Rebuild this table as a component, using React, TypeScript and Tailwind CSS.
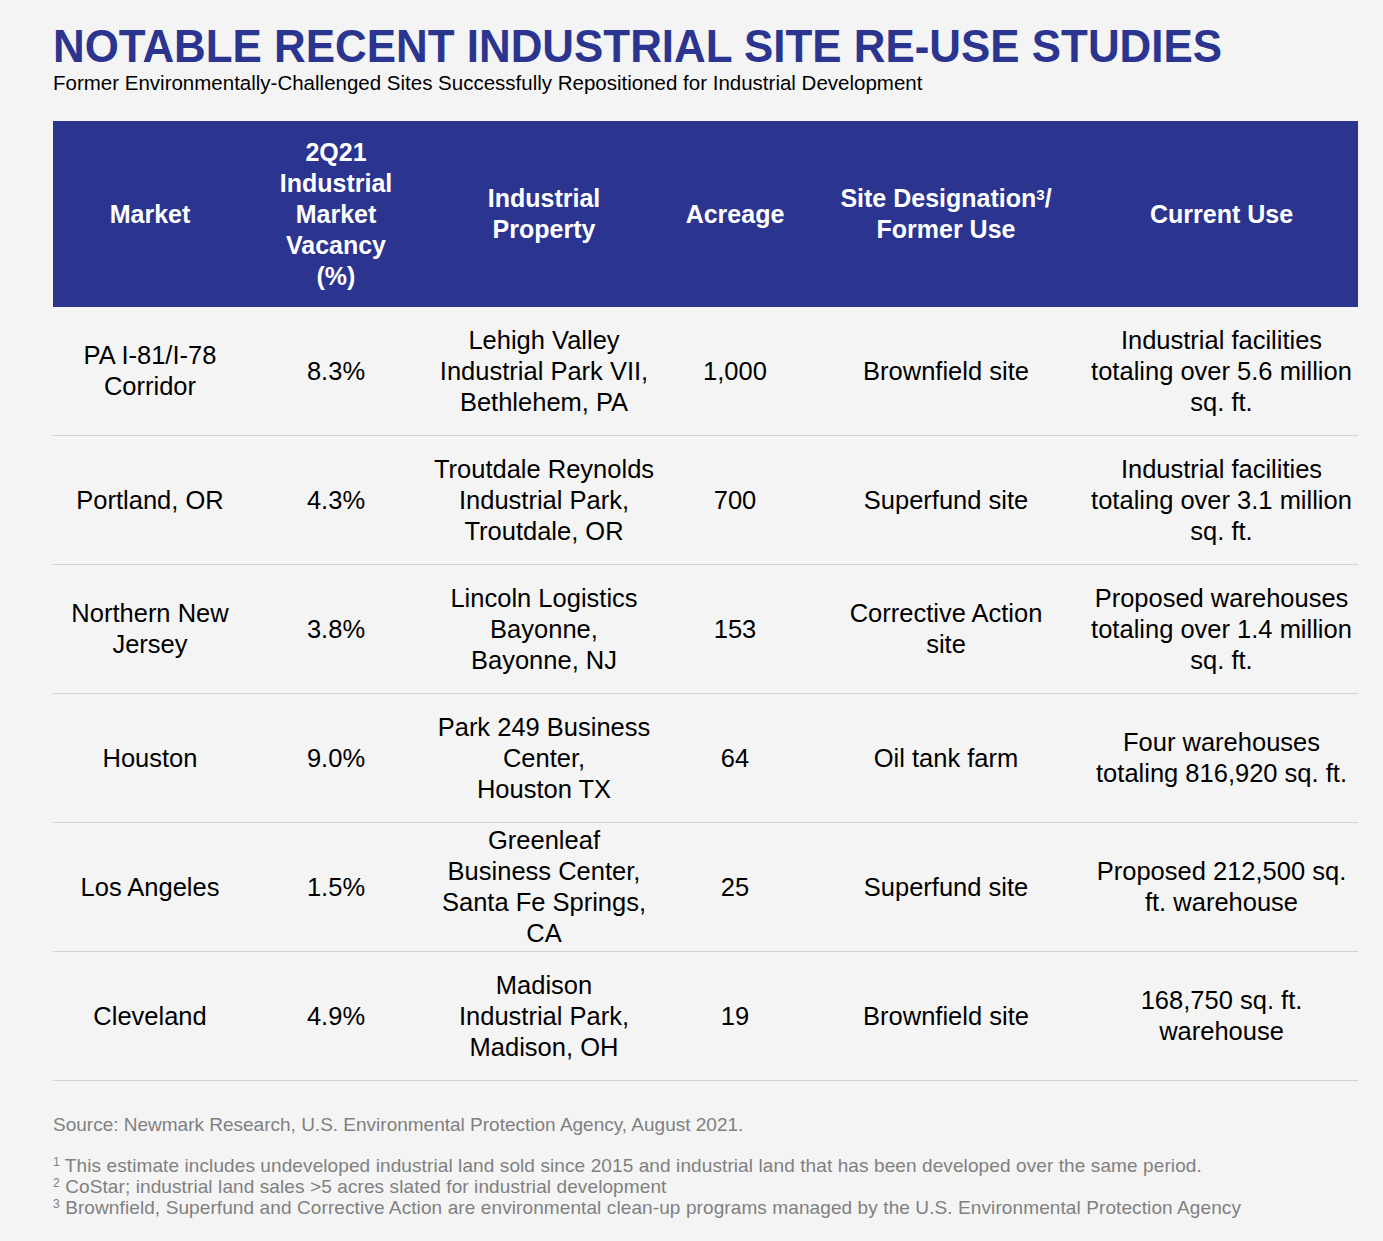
const rows = [
  ["PA I-81/I-78\nCorridor", "8.3%", "Lehigh Valley\nIndustrial Park VII,\nBethlehem, PA", "1,000", "Brownfield site", "Industrial facilities\ntotaling over 5.6 million\nsq. ft."],
  ["Portland, OR", "4.3%", "Troutdale Reynolds\nIndustrial Park,\nTroutdale, OR", "700", "Superfund site", "Industrial facilities\ntotaling over 3.1 million\nsq. ft."],
  ["Northern New\nJersey", "3.8%", "Lincoln Logistics\nBayonne,\nBayonne, NJ", "153", "Corrective Action\nsite", "Proposed warehouses\ntotaling over 1.4 million\nsq. ft."],
  ["Houston", "9.0%", "Park 249 Business\nCenter,\nHouston TX", "64", "Oil tank farm", "Four warehouses\ntotaling 816,920 sq. ft."],
  ["Los Angeles", "1.5%", "Greenleaf\nBusiness Center,\nSanta Fe Springs,\nCA", "25", "Superfund site", "Proposed 212,500 sq.\nft. warehouse"],
  ["Cleveland", "4.9%", "Madison\nIndustrial Park,\nMadison, OH", "19", "Brownfield site", "168,750 sq. ft.\nwarehouse"],
];

const cols = "grid grid-cols-[194px_178px_238px_144px_278px_273px]";
const font = { fontFamily: '"Liberation Sans", Arial, sans-serif' };

export default function App() {
  return (
    <div className="w-[1383px] h-[1241px] bg-[#f4f4f4] px-[53px] pt-[20px] text-black" style={font}>
      <h1 className="text-[47px] leading-[52px] font-bold text-[#2b3590] whitespace-nowrap origin-left scale-x-[0.934]">NOTABLE RECENT INDUSTRIAL SITE RE-USE STUDIES</h1>
      <p className="text-[20.5px] leading-[22px]">Former Environmentally-Challenged Sites Successfully Repositioned for Industrial Development</p>

      <div className="mt-[27px] w-[1305px]">
        <div className={`${cols} h-[186px] bg-[#2b3590] text-white font-bold text-[25px] leading-[31px] text-center`}>
          <div className="flex items-center justify-center"><span>Market</span></div>
          <div className="flex items-center justify-center"><span>2Q21<br />Industrial<br />Market<br />Vacancy<br />(%)</span></div>
          <div className="flex items-center justify-center"><span>Industrial<br />Property</span></div>
          <div className="flex items-center justify-center"><span>Acreage</span></div>
          <div className="flex items-center justify-center"><span>Site Designation<sup className="text-[15px] leading-none">3</sup>/<br />Former Use</span></div>
          <div className="flex items-center justify-center"><span>Current Use</span></div>
        </div>
        {rows.map((r, i) => (
          <div key={i} className={`${cols} h-[129px] border-b border-[#d3d3d3] text-[25.5px] leading-[31px] text-center`}>
            {r.map((c, j) => (
              <div key={j} className="flex items-center justify-center whitespace-pre-line"><span>{c}</span></div>
            ))}
          </div>
        ))}
      </div>

      <p className="mt-[33px] text-[19px] leading-[22px] text-[#808080]">Source: Newmark Research, U.S. Environmental Protection Agency, August 2021.</p>
      <div className="mt-[19px] text-[19px] leading-[21px] text-[#808080] tracking-[0.1px]">
        <p><sup className="text-[12px]">1</sup> This estimate includes undeveloped industrial land sold since 2015 and industrial land that has been developed over the same period.</p>
        <p><sup className="text-[12px]">2</sup> CoStar; industrial land sales &gt;5 acres slated for industrial development</p>
        <p><sup className="text-[12px]">3</sup> Brownfield, Superfund and Corrective Action are environmental clean-up programs managed by the U.S. Environmental Protection Agency</p>
      </div>
    </div>
  );
}
